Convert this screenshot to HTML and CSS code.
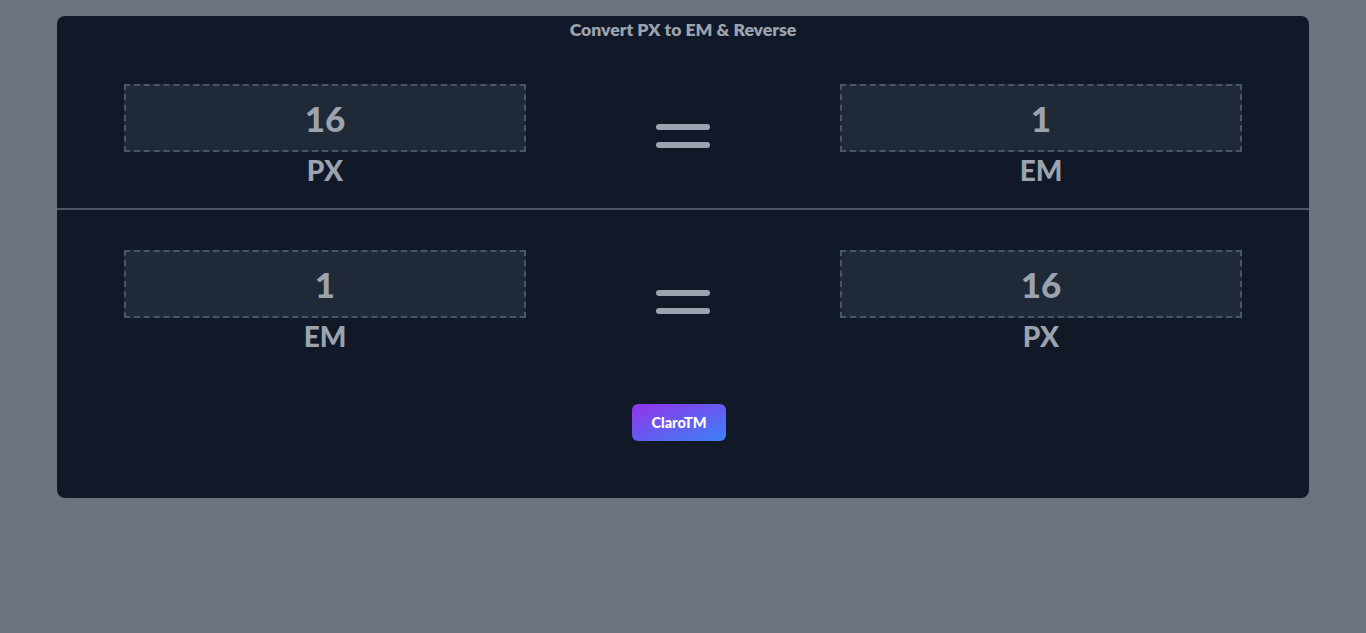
FILE: index.html
```html
<!DOCTYPE html>
<html lang="en">
<head>
<meta charset="utf-8">
<title>Convert PX to EM &amp; Reverse</title>
<link rel="stylesheet" href="styles.css">
</head>
<body>
<main class="card">
  <h1 class="title">Convert PX to EM &amp; Reverse</h1>
  <section class="row row-first">
    <div class="field">
      <div class="box">16</div>
      <div class="unit">PX</div>
    </div>
    <div class="equals"><span></span><span></span></div>
    <div class="field">
      <div class="box">1</div>
      <div class="unit">EM</div>
    </div>
  </section>
  <hr class="divider">
  <section class="row row-second">
    <div class="field">
      <div class="box">1</div>
      <div class="unit">EM</div>
    </div>
    <div class="equals"><span></span><span></span></div>
    <div class="field">
      <div class="box">16</div>
      <div class="unit">PX</div>
    </div>
  </section>
  <div class="footer">
    <a class="brand" href="#">ClaroTM</a>
  </div>
</main>
</body>
</html>
```
FILE: styles.css
```css
html, body {
  margin: 0;
  padding: 0;
}
body {
  background: #6b7280;
  font-family: "Lato", "Noto Sans", sans-serif;
  color: #9ca3af;
  padding-top: 16px;
  min-height: 633px;
  box-sizing: border-box;
}
.card {
  width: 1252px;
  margin: 0 auto;
  background: #111827;
  border-radius: 8px;
  display: flex;
  flex-direction: column;
}
.title {
  margin: 0;
  text-align: center;
  font-size: 17.6px;
  line-height: 28px;
  font-weight: 800;
  color: #9ca3af;
}
.row {
  display: flex;
  justify-content: center;
  align-items: center;
  gap: 130px;
}
.row-first {
  padding-top: 40px;
  padding-bottom: 20px;
}
.row-second {
  padding-top: 40px;
}
.field {
  width: 402px;
  display: flex;
  flex-direction: column;
  align-items: center;
}
.box {
  width: 100%;
  box-sizing: border-box;
  height: 68px;
  background: #1f2937;
  border: 2px dashed #4b5563;
  text-align: center;
  font-size: 35px;
  line-height: 64px;
  font-weight: 900;
  color: #9ca3af;
}
.unit {
  font-size: 28px;
  line-height: 36px;
  font-weight: 900;
  color: #9ca3af;
}
.equals {
  width: 54px;
  display: flex;
  flex-direction: column;
  gap: 12px;
}
.equals span {
  display: block;
  height: 6px;
  border-radius: 3px;
  background: #9ca3af;
}
.divider {
  margin: 0;
  border: 0;
  height: 2px;
  background: #4b5563;
}
.footer {
  display: flex;
  justify-content: center;
  padding-top: 50px;
  padding-bottom: 57px;
}
.brand {
  display: flex;
  align-items: center;
  justify-content: center;
  width: 94px;
  height: 37px;
  margin-right: 8px;
  border-radius: 6px;
  background: linear-gradient(to bottom right, #9333ea, #3b82f6);
  color: #ffffff;
  font-size: 14.5px;
  font-weight: 900;
  text-decoration: none;
}
```
